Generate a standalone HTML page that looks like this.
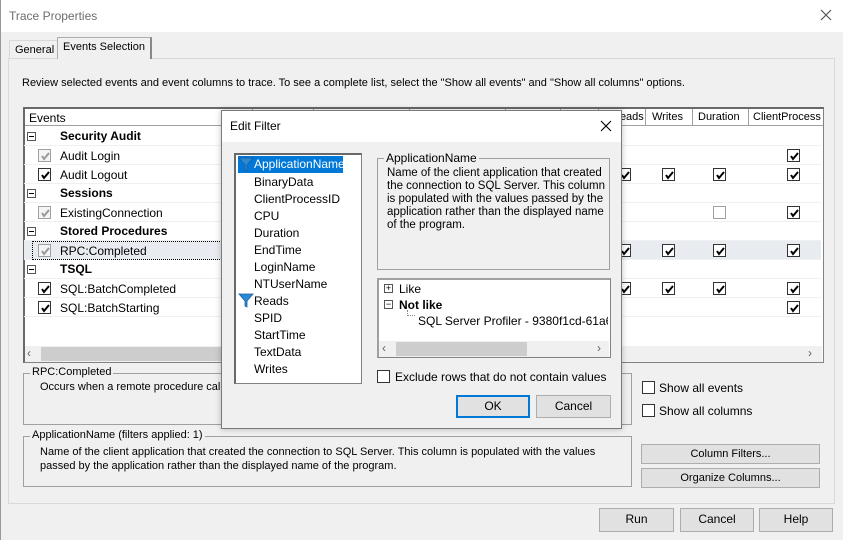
<!DOCTYPE html>
<html><head><meta charset="utf-8"><style>
*{box-sizing:border-box}
body{margin:0;width:843px;height:540px;overflow:hidden;background:#f0f0f0;font-family:"Liberation Sans",Arial,sans-serif;font-size:12px;color:#000;position:relative}
.a{position:absolute;white-space:nowrap}
.cb{position:absolute;width:13px;height:13px;border:1px solid #333;background:#fff}
.cb.g{border-color:#a0a0a0;background:#f4f4f4}
.cb svg{position:absolute;left:1px;top:1px}
.btn{position:absolute;border:1px solid #adadad;background:#e1e1e1;text-align:center;line-height:21px}
.grp{position:absolute;border:1px solid #a0a0a0}
.grp .l{position:absolute;top:-8px;left:6px;background:#f0f0f0;padding:0 2px}
.row{position:absolute;left:24px;width:797px;height:19px;border-bottom:1px solid #f0f0f0}
.b{font-weight:bold}
.mn{position:absolute;left:3px;width:9px;height:9px;border:1px solid #555;background:#fff}
.mn:after{content:"";position:absolute;left:1px;top:3px;width:5px;height:1px;background:#000}
.vl{position:absolute;top:109px;width:1px;height:17px;background:#a0a0a0}
.li{position:absolute;left:254px}
.s{font-size:11px}
</style></head><body>
<div class="a" style="left:0;top:0;width:843px;height:32px;background:#fff"></div>
<div class="a" style="left:9px;top:9px;color:#6d6d6d;font-size:12px">Trace Properties</div>
<svg class="a" style="left:820px;top:9px" width="12" height="12"><path d="M1 1L11 11M11 1L1 11" stroke="#555" stroke-width="1.2"/></svg>
<div class="a" style="left:0;top:0;width:1px;height:540px;background:#999"></div>
<div class="a" style="left:8px;top:58px;width:827px;height:446px;border:1px solid #d9d9d9;background:#f0f0f0"></div>
<div class="a s" style="left:9px;top:40px;width:49px;height:19px;border:1px solid #d9d9d9;border-bottom:none;padding:3px 5px">General</div>
<div class="a s" style="left:57px;top:37px;width:95px;height:22px;border:1px solid #adadad;border-right:2px solid #888;border-bottom:none;background:#f0f0f0;padding:3px 5px">Events Selection</div>
<div class="a s" style="left:22px;top:77px">Review selected events and event columns to trace. To see a complete list, select the "Show all events" and "Show all columns" options.</div>
<div class="a" style="left:23px;top:107px;width:801px;height:256px;border:1px solid #828282;border-top:2px solid #696969;border-left:2px solid #696969;background:#fff"></div>
<div class="a" style="left:25px;top:109px;width:798px;height:17px;background:#fff;border-bottom:1px solid #a0a0a0"></div>
<div class="a" style="left:29px;top:111px">Events</div>
<div class="vl" style="left:252px"></div><div class="vl" style="left:313px"></div><div class="vl" style="left:409px"></div><div class="vl" style="left:505px"></div><div class="vl" style="left:560px"></div><div class="vl" style="left:598px"></div><div class="vl" style="left:645px"></div><div class="vl" style="left:692px"></div><div class="vl" style="left:748px"></div>
<div class="a s" style="left:612px;top:111px">Reads</div><div class="a s" style="left:652px;top:111px">Writes</div><div class="a s" style="left:698px;top:111px">Duration</div><div class="a s" style="left:753px;top:111px;width:68px;overflow:hidden">ClientProcessID</div>
<div class="row" style="top:127px"><div class="mn" style="top:5px"></div><span class="a b" style="left:36px;top:2px">Security Audit</span></div>
<div class="row" style="top:146px"><span class="a" style="left:36px;top:3px">Audit Login</span></div>
<div class="row" style="top:165px"><span class="a" style="left:36px;top:3px">Audit Logout</span></div>
<div class="row" style="top:184px"><div class="mn" style="top:5px"></div><span class="a b" style="left:36px;top:2px">Sessions</span></div>
<div class="row" style="top:203px"><span class="a" style="left:36px;top:3px">ExistingConnection</span></div>
<div class="row" style="top:222px"><div class="mn" style="top:5px"></div><span class="a b" style="left:36px;top:2px">Stored Procedures</span></div>
<div class="row" style="top:241px;background:#e8ecf0"><div class="a" style="left:8px;top:0;width:196px;height:19px;border:1px dotted #000;border-right:none"></div><span class="a" style="left:36px;top:3px">RPC:Completed</span></div>
<div class="row" style="top:260px"><div class="mn" style="top:5px"></div><span class="a b" style="left:36px;top:2px">TSQL</span></div>
<div class="row" style="top:279px"><span class="a" style="left:36px;top:3px">SQL:BatchCompleted</span></div>
<div class="row" style="top:298px"><span class="a" style="left:36px;top:3px">SQL:BatchStarting</span></div>
<div class="cb g" style="left:38px;top:149px"><svg width="11" height="11"><path d="M2 5L4 8L9 2" stroke="#999" stroke-width="2" fill="none"/></svg></div>
<div class="cb" style="left:38px;top:168px"><svg width="11" height="11"><path d="M2 5L4 8L9 2" stroke="#000" stroke-width="2" fill="none"/></svg></div>
<div class="cb g" style="left:38px;top:206px"><svg width="11" height="11"><path d="M2 5L4 8L9 2" stroke="#999" stroke-width="2" fill="none"/></svg></div>
<div class="cb g" style="left:38px;top:244px"><svg width="11" height="11"><path d="M2 5L4 8L9 2" stroke="#999" stroke-width="2" fill="none"/></svg></div>
<div class="cb" style="left:38px;top:282px"><svg width="11" height="11"><path d="M2 5L4 8L9 2" stroke="#000" stroke-width="2" fill="none"/></svg></div>
<div class="cb" style="left:38px;top:301px"><svg width="11" height="11"><path d="M2 5L4 8L9 2" stroke="#000" stroke-width="2" fill="none"/></svg></div>
<div class="cb" style="left:787px;top:149px"><svg width="11" height="11"><path d="M2 5L4 8L9 2" stroke="#000" stroke-width="2" fill="none"/></svg></div>
<div class="cb" style="left:618px;top:168px"><svg width="11" height="11"><path d="M2 5L4 8L9 2" stroke="#000" stroke-width="2" fill="none"/></svg></div>
<div class="cb" style="left:662px;top:168px"><svg width="11" height="11"><path d="M2 5L4 8L9 2" stroke="#000" stroke-width="2" fill="none"/></svg></div>
<div class="cb" style="left:713px;top:168px"><svg width="11" height="11"><path d="M2 5L4 8L9 2" stroke="#000" stroke-width="2" fill="none"/></svg></div>
<div class="cb" style="left:787px;top:168px"><svg width="11" height="11"><path d="M2 5L4 8L9 2" stroke="#000" stroke-width="2" fill="none"/></svg></div>
<div class="cb g" style="left:713px;top:206px;background:#fff"></div>
<div class="cb" style="left:787px;top:206px"><svg width="11" height="11"><path d="M2 5L4 8L9 2" stroke="#000" stroke-width="2" fill="none"/></svg></div>
<div class="cb" style="left:618px;top:244px"><svg width="11" height="11"><path d="M2 5L4 8L9 2" stroke="#000" stroke-width="2" fill="none"/></svg></div>
<div class="cb" style="left:662px;top:244px"><svg width="11" height="11"><path d="M2 5L4 8L9 2" stroke="#000" stroke-width="2" fill="none"/></svg></div>
<div class="cb" style="left:713px;top:244px"><svg width="11" height="11"><path d="M2 5L4 8L9 2" stroke="#000" stroke-width="2" fill="none"/></svg></div>
<div class="cb" style="left:787px;top:244px"><svg width="11" height="11"><path d="M2 5L4 8L9 2" stroke="#000" stroke-width="2" fill="none"/></svg></div>
<div class="cb" style="left:618px;top:282px"><svg width="11" height="11"><path d="M2 5L4 8L9 2" stroke="#000" stroke-width="2" fill="none"/></svg></div>
<div class="cb" style="left:662px;top:282px"><svg width="11" height="11"><path d="M2 5L4 8L9 2" stroke="#000" stroke-width="2" fill="none"/></svg></div>
<div class="cb" style="left:713px;top:282px"><svg width="11" height="11"><path d="M2 5L4 8L9 2" stroke="#000" stroke-width="2" fill="none"/></svg></div>
<div class="cb" style="left:787px;top:282px"><svg width="11" height="11"><path d="M2 5L4 8L9 2" stroke="#000" stroke-width="2" fill="none"/></svg></div>
<div class="cb" style="left:787px;top:301px"><svg width="11" height="11"><path d="M2 5L4 8L9 2" stroke="#000" stroke-width="2" fill="none"/></svg></div>
<div class="a" style="left:25px;top:346px;width:797px;height:16px;background:#f0f0f0"></div>
<div class="a" style="left:41px;top:347px;width:200px;height:14px;background:#cdcdcd"></div>
<div class="a" style="left:27px;top:346px;color:#606060">‹</div><div class="a" style="left:808px;top:346px;color:#606060">›</div>
<div class="grp s" style="left:23px;top:373px;width:609px;height:52px"><span class="l">RPC:Completed</span><span class="a" style="left:16px;top:7px">Occurs when a remote procedure call has been completed.</span></div>
<div class="cb" style="left:642px;top:381px"></div><div class="a" style="left:659px;top:381px">Show all events</div>
<div class="cb" style="left:642px;top:404px"></div><div class="a" style="left:659px;top:404px">Show all columns</div>
<div class="grp s" style="left:23px;top:436px;width:609px;height:51px"><span class="l">ApplicationName (filters applied: 1)</span><span class="a" style="left:16px;top:8px;white-space:normal;width:590px;line-height:14px">Name of the client application that created the connection to SQL Server. This column is populated with the values passed by the application rather than the displayed name of the program.</span></div>
<div class="btn s" style="left:641px;top:444px;width:179px;height:20px;line-height:18px">Column Filters...</div>
<div class="btn s" style="left:641px;top:468px;width:179px;height:20px;line-height:18px">Organize Columns...</div>
<div class="btn" style="left:599px;top:508px;width:75px;height:24px">Run</div>
<div class="btn" style="left:680px;top:508px;width:74px;height:24px">Cancel</div>
<div class="btn" style="left:759px;top:508px;width:74px;height:24px">Help</div>
<div class="a" style="left:221px;top:110px;width:401px;height:319px;border:1px solid #7a7a7a;background:#f0f0f0;box-shadow:0 0 6px rgba(0,0,0,.25)"></div>
<div class="a" style="left:222px;top:111px;width:399px;height:31px;background:#fff"></div>
<div class="a" style="left:230px;top:119px">Edit Filter</div>
<svg class="a" style="left:600px;top:120px" width="12" height="12"><path d="M1 1L11 11M11 1L1 11" stroke="#000" stroke-width="1.1"/></svg>
<div class="a" style="left:234px;top:153px;width:128px;height:231px;background:#fff;border:1px solid #828282;border-top:2px solid #696969;border-left:2px solid #696969"></div>
<div class="a" style="left:238px;top:156px;width:105px;height:17px;background:#0078d7"></div>
<svg class="a" style="left:238px;top:157px" width="16" height="15"><path d="M1 1H15L9 8V14L7 13V8Z" fill="#2a8ad4" stroke="#1d5f9e" stroke-width=".8"/></svg>
<svg class="a" style="left:238px;top:293px" width="16" height="15"><path d="M1 1H15L9 8V14L7 13V8Z" fill="#2a8ad4" stroke="#1d5f9e" stroke-width=".8"/></svg>
<div class="li" style="top:157px;color:#fff;width:89px;overflow:hidden">ApplicationName</div>
<div class="li" style="top:175px">BinaryData</div>
<div class="li" style="top:192px">ClientProcessID</div>
<div class="li" style="top:209px">CPU</div>
<div class="li" style="top:226px">Duration</div>
<div class="li" style="top:243px">EndTime</div>
<div class="li" style="top:260px">LoginName</div>
<div class="li" style="top:277px">NTUserName</div>
<div class="li" style="top:294px">Reads</div>
<div class="li" style="top:311px">SPID</div>
<div class="li" style="top:328px">StartTime</div>
<div class="li" style="top:345px">TextData</div>
<div class="li" style="top:362px">Writes</div>
<div class="grp" style="left:377px;top:158px;width:233px;height:112px"><span class="l" style="left:6px">ApplicationName</span><span class="a" style="left:9px;top:8px;white-space:normal;width:220px;line-height:13px;font-size:11.5px">Name of the client application that created the connection to SQL Server. This column is populated with the values passed by the application rather than the displayed name of the program.</span></div>
<div class="a" style="left:377px;top:278px;width:234px;height:80px;background:#fff;border:1px solid #828282;border-top:2px solid #a0a0a0;border-left:2px solid #a0a0a0"></div>
<div class="a" style="left:384px;top:284px;width:9px;height:9px;border:1px solid #555;font-size:9px;line-height:7px;text-align:center">+</div>
<div class="a" style="left:384px;top:300px;width:9px;height:9px;border:1px solid #555;font-size:9px;line-height:7px;text-align:center">−</div>
<div class="a" style="left:399px;top:282px">Like</div>
<div class="a b" style="left:399px;top:298px">Not like</div>
<div class="a" style="left:407px;top:310px;width:8px;height:6px;border-left:1px dotted #888;border-bottom:1px dotted #888"></div>
<div class="a" style="left:418px;top:314px;width:190px;overflow:hidden">SQL Server Profiler - 9380f1cd-61a6-4f6</div>
<div class="a" style="left:379px;top:341px;width:230px;height:16px;background:#f0f0f0"></div>
<div class="a" style="left:396px;top:342px;width:131px;height:14px;background:#cdcdcd"></div>
<div class="a" style="left:382px;top:341px;color:#606060">‹</div><div class="a" style="left:597px;top:341px;color:#606060">›</div>
<div class="cb" style="left:377px;top:370px"></div><div class="a" style="left:395px;top:370px">Exclude rows that do not contain values</div>
<div class="btn" style="left:456px;top:395px;width:74px;height:23px;border:2px solid #0078d7;line-height:19px">OK</div>
<div class="btn" style="left:536px;top:395px;width:75px;height:23px">Cancel</div>
</body></html>
